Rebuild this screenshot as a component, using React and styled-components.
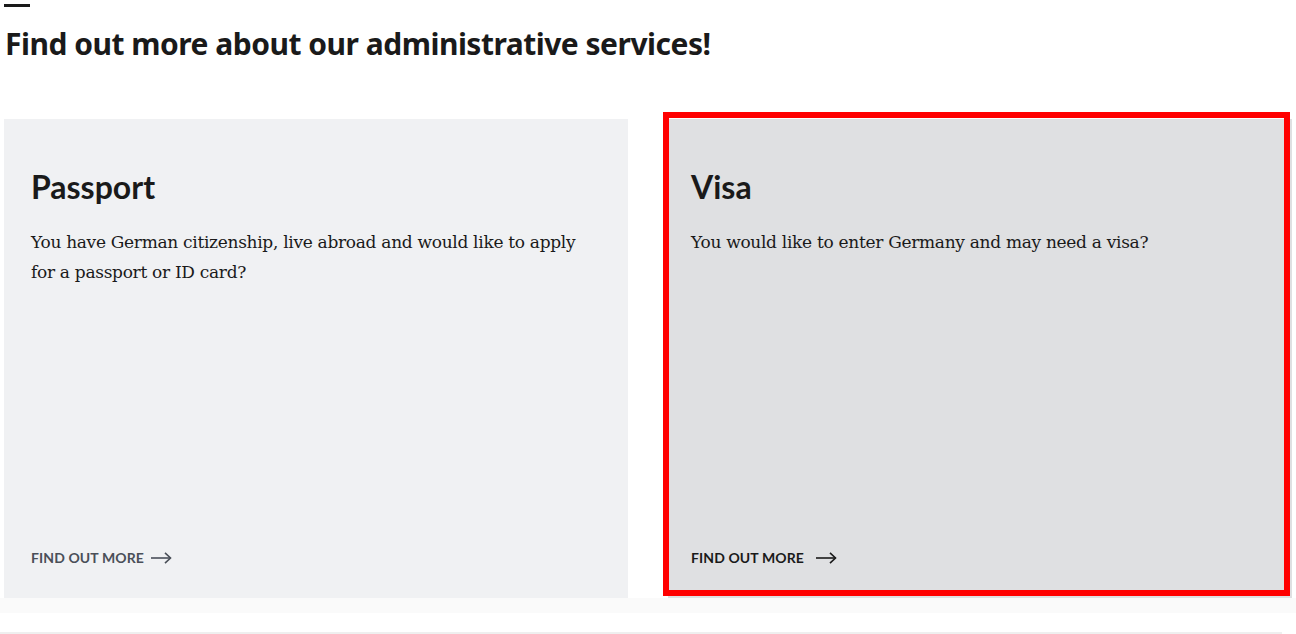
import React from 'react';
import styled, { createGlobalStyle } from 'styled-components';

const GlobalStyle = createGlobalStyle`
  html, body {
    margin: 0;
    padding: 0;
    background: #fff;
  }
  body {
    font-family: 'Lato', 'Liberation Sans', sans-serif;
    color: #1a1a1a;
  }
`;

const cards = [
  {
    title: 'Passport',
    text: 'You have German citizenship, live abroad and would like to apply for a passport or ID card?',
  },
  {
    title: 'Visa',
    text: 'You would like to enter Germany and may need a visa?',
    active: true,
  },
];

const Arrow = () => (
  <svg width="21" height="12" viewBox="0 0 21 12" fill="none" stroke="currentColor" strokeWidth="1.6">
    <path d="M0 6h19.5" />
    <path d="M14 0.8 19.5 6 14 11.2" />
  </svg>
);

const App = () => (
  <>
    <GlobalStyle />
    <Page>
      <Dash />
      <Heading>Find out more about our administrative services!</Heading>
      <Grid>
        {cards.map((c) => (
          <Card key={c.title} active={c.active}>
            <CardTitle>{c.title}</CardTitle>
            <CardText>{c.text}</CardText>
            <More active={c.active}>
              FIND OUT MORE
              <Arrow />
            </More>
            {c.active && <Highlight />}
          </Card>
        ))}
      </Grid>
      <Band />
      <Rule />
    </Page>
  </>
);

export default App;

const Page = styled.div`
  width: 1296px;
  height: 634px;
  overflow: hidden;
  padding-top: 4px;
  box-sizing: border-box;
`;

const Dash = styled.div`
  width: 26px;
  height: 3px;
  margin-left: 4px;
  background: #1a1a1a;
`;

const Heading = styled.h2`
  margin: 19px 0 0 5px;
  font-family: 'Noto Sans', sans-serif;
  font-size: 30px;
  line-height: 36px;
  font-weight: 700;
  letter-spacing: -0.5px;
`;

const Grid = styled.div`
  display: grid;
  grid-template-columns: 624px 624px;
  column-gap: 40px;
  margin: 57px 0 0 4px;
`;

const Card = styled.div`
  position: relative;
  display: flex;
  flex-direction: column;
  height: 479px;
  box-sizing: border-box;
  padding: ${(p) => (p.active ? '50px 23px 32px' : '50px 27px 32px')};
  background: ${(p) => (p.active ? '#dfe0e2' : '#f0f1f3')};
`;

const CardTitle = styled.h3`
  margin: 0;
  font-size: 32px;
  line-height: 36px;
  font-weight: 700;
  color: #1a1a1a;
`;

const CardText = styled.p`
  margin: 22px 0 0;
  max-width: 555px;
  font-family: 'DejaVu Serif', serif;
  font-size: 17px;
  line-height: 30px;
  letter-spacing: -0.3px;
  color: #1a1a1a;
`;

const More = styled.a`
  margin-top: auto;
  display: flex;
  align-items: center;
  gap: ${(p) => (p.active ? '12px' : '7px')};
  font-size: 14px;
  font-weight: 700;
  letter-spacing: 0.1px;
  color: ${(p) => (p.active ? '#1a1a1a' : '#4a4f58')};
  cursor: pointer;
`;

const Highlight = styled.div`
  position: absolute;
  left: -5px;
  top: -7px;
  right: 2px;
  bottom: 2px;
  border: 6px solid #ff0000;
  pointer-events: none;
`;

const Band = styled.div`
  height: 15px;
  background: #fafafa;
`;

const Rule = styled.div`
  margin-top: 19px;
  width: 1282px;
  height: 2px;
  background: #efefef;
`;
